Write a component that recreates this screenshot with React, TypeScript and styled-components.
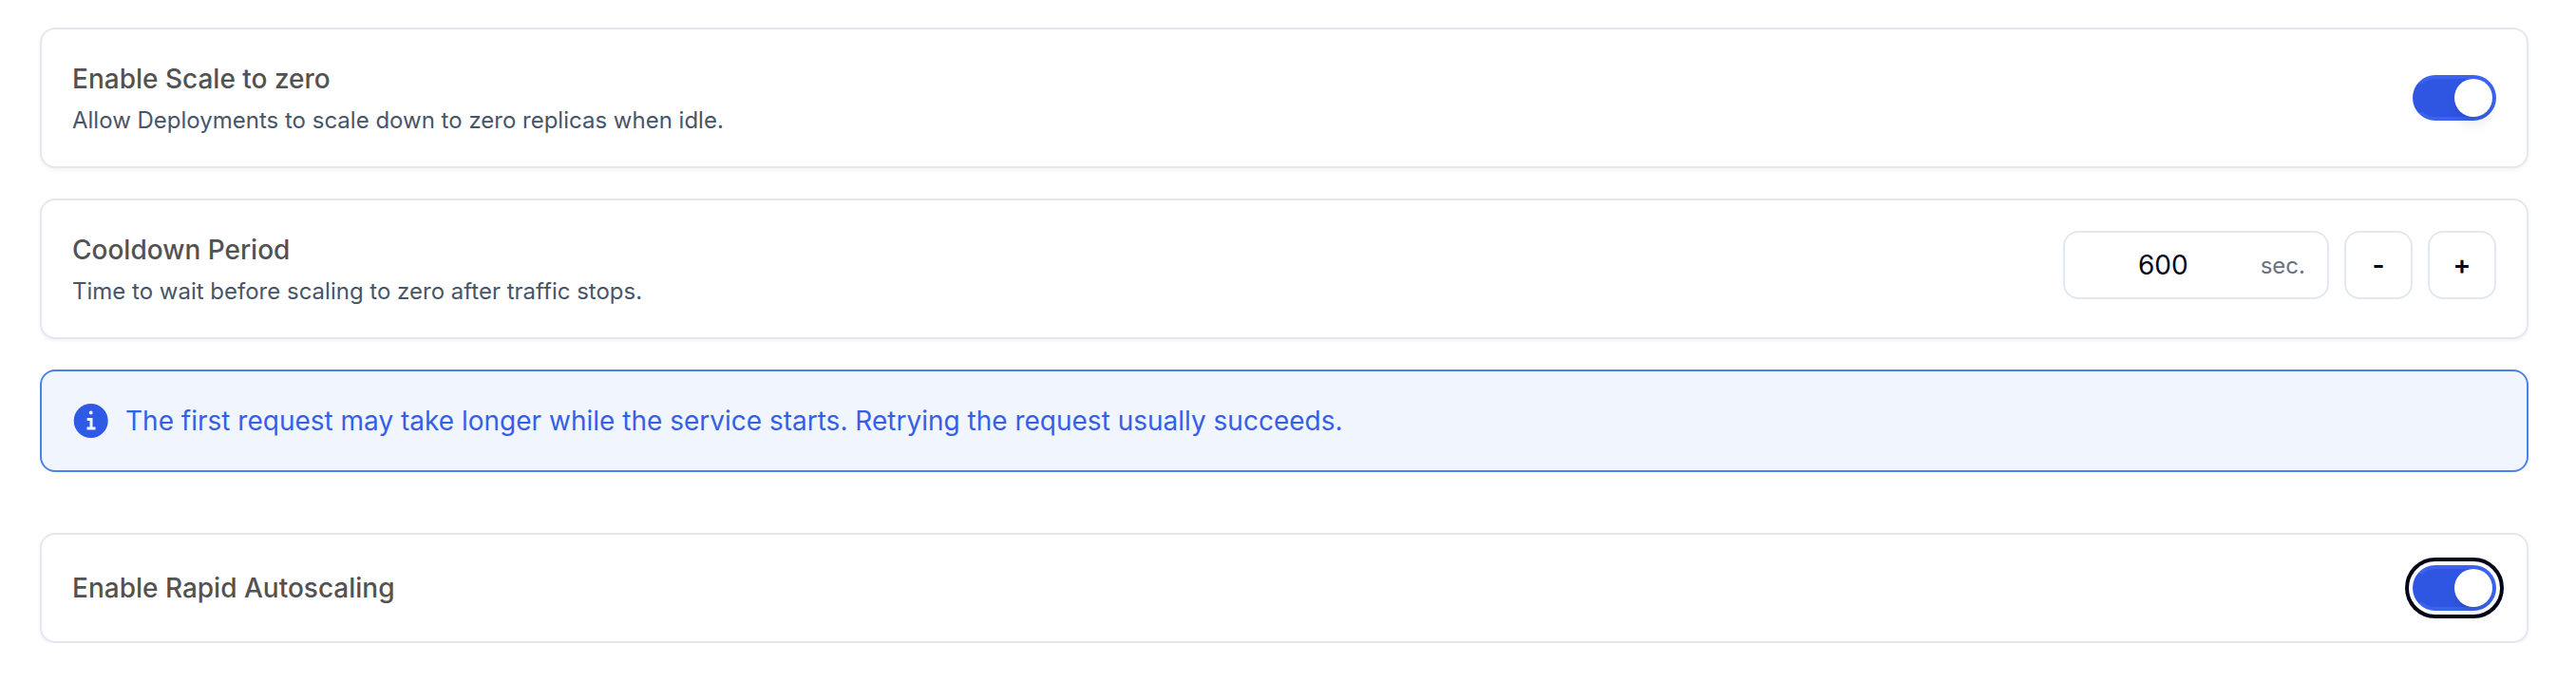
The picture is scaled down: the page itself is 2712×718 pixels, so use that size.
import React, { useState } from "react";
import styled, { createGlobalStyle } from "styled-components";

const GlobalStyle = createGlobalStyle`
  html, body {
    margin: 0;
    padding: 0;
    background: #fff;
    font-family: Inter, "Liberation Sans", sans-serif;
  }
  * {
    box-sizing: border-box;
  }
`;

const InfoIcon = () => (
  <svg width="40" height="40" viewBox="0 0 40 40" aria-hidden="true">
    <path
      fillRule="evenodd"
      fill="#2f5ae5"
      d="M19.700 2a18 18 0 1 1 0 36 18 18 0 0 1 0-36zM19.700 9.500a2 2 0 1 0 0 4 2 2 0 0 0 0-4zM15.700 17h5.800v9.500h3v3h-9v-3h3v-6.500h-2.800z"
    />
  </svg>
);

const App = (): JSX.Element => {
  const [scaleToZero, setScaleToZero] = useState(true);
  const [rapid, setRapid] = useState(true);
  const [cooldown, setCooldown] = useState(600);

  return (
    <Page>
      <GlobalStyle />
      <Card>
        <Labels>
          <Title>Enable Scale to zero</Title>
          <Description>Allow Deployments to scale down to zero replicas when idle.</Description>
        </Labels>
        <Toggle $on={scaleToZero} onClick={() => setScaleToZero(!scaleToZero)} />
      </Card>
      <Card>
        <Labels>
          <Title>Cooldown Period</Title>
          <Description>Time to wait before scaling to zero after traffic stops.</Description>
        </Labels>
        <Stepper>
          <ValueBox>
            <Value>{cooldown}</Value>
            <Unit>sec.</Unit>
          </ValueBox>
          <StepButton onClick={() => setCooldown(cooldown - 1)}>-</StepButton>
          <StepButton onClick={() => setCooldown(cooldown + 1)}>+</StepButton>
        </Stepper>
      </Card>
      <Notice>
        <InfoIcon />
        <span>The first request may take longer while the service starts. Retrying the request usually succeeds.</span>
      </Notice>
      <LastCard>
        <Title>Enable Rapid Autoscaling</Title>
        <Toggle $on={rapid} $focused onClick={() => setRapid(!rapid)} />
      </LastCard>
    </Page>
  );
};

export default App;

const Page = styled.div`
  display: flex;
  flex-direction: column;
  row-gap: 32px;
  padding: 29px 50px 0 42px;
`;

const Card = styled.div`
  display: flex;
  align-items: center;
  justify-content: space-between;
  padding: 32px;
  background: #fff;
  border: 2px solid #e2e8f0;
  border-radius: 16px;
  box-shadow: 0 2px 4px rgba(15, 23, 42, 0.05);
`;

const LastCard = styled(Card)`
  margin-top: 32px;
`;

const Labels = styled.div`
  display: flex;
  flex-direction: column;
  row-gap: 8px;
`;

const Title = styled.div`
  font-size: 28px;
  line-height: 40px;
  font-weight: 500;
  color: #525252;
`;

const Description = styled.div`
  font-size: 24px;
  line-height: 32px;
  color: #475569;
`;

const Toggle = styled.button<{ $on: boolean; $focused?: boolean }>`
  position: relative;
  flex: none;
  width: 88px;
  height: 48px;
  padding: 0;
  border: 4px solid #3b63ee;
  border-left-color: #2f56e2;
  border-radius: 24px;
  background: #2f56e2;
  cursor: pointer;
  outline: ${(p) => (p.$focused ? "4px solid #020617" : "none")};
  outline-offset: 4px;

  &::after {
    content: "";
    position: absolute;
    top: 0;
    left: ${(p) => (p.$on ? "40px" : "0")};
    width: 40px;
    height: 40px;
    border-radius: 50%;
    background: #fff;
    box-shadow: 0 10px 15px -3px rgba(0, 0, 0, 0.1), 0 4px 6px -4px rgba(0, 0, 0, 0.1);
  }
`;

const Stepper = styled.div`
  display: flex;
  align-self: flex-start;
  column-gap: 16px;
`;

const ValueBox = styled.div`
  display: flex;
  align-items: center;
  width: 280px;
  height: 72px;
  padding: 0 23px;
  border: 2px solid #e2e8f0;
  border-radius: 16px;
  background: #fff;
`;

const Value = styled.span`
  flex: 1;
  padding-right: 22px;
  text-align: center;
  font-size: 28px;
  color: #020617;
`;

const Unit = styled.span`
  font-size: 24px;
  color: #6b7280;
`;

const StepButton = styled.button`
  width: 72px;
  height: 72px;
  padding: 0;
  border: 2px solid #e2e8f0;
  border-radius: 16px;
  background: #fff;
  font-family: inherit;
  font-size: 28px;
  font-weight: 600;
  color: #020617;
  cursor: pointer;
`;

const Notice = styled.div`
  display: flex;
  align-items: center;
  column-gap: 16px;
  padding: 32px;
  border: 2px solid #4b80ee;
  border-radius: 16px;
  background: #f0f5fe;
  font-size: 28px;
  line-height: 40px;
  color: #3560e6;
`;
